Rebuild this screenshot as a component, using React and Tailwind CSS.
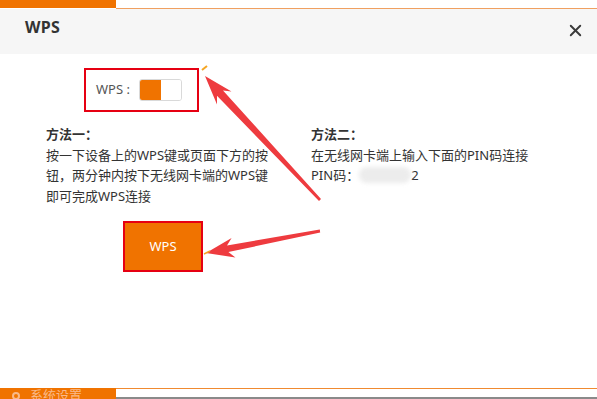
import React from 'react';
import { X } from 'lucide-react';

const font = { fontFamily: '"Noto Sans", "Noto Sans CJK SC", sans-serif' };

function Arrows() {
  return (
    <svg className="absolute inset-0 pointer-events-none" width="597" height="399" viewBox="0 0 597 399">
      <polygon
        points="205,76 231.5,91.5 223,90.5 321,199 319,201 217,95.8 217,104.5"
        fill="#ee3b3f"
      />
      <path d="M202 70 L207 66" stroke="#f5a623" strokeWidth="2" />
      <polygon
        points="206,253 231.6,237.9 227,245.5 319.8,229.5 320.2,232.5 228.4,252 235.4,257.5"
        fill="#ee3b3f"
      />
      <path d="M204 254 L210 251" stroke="#f5a623" strokeWidth="1.5" />
    </svg>
  );
}

export default function App() {
  return (
    <div className="relative w-[597px] h-[399px] bg-white flex flex-col overflow-hidden" style={font}>
      <div className="flex h-[9px] shrink-0">
        <div className="w-[116px] h-[8px] bg-[#f07300]" />
        <div className="flex-1 h-[9px] border-b border-[#f0a060]" />
      </div>

      <div className="h-[45px] shrink-0 bg-[#f6f6f6] flex items-center justify-between pl-[25px] pr-[12px]">
        <span className="text-[16px] font-bold text-[#333] -mt-[10px] tracking-[0.3px]">WPS</span>
        <X className="w-[19px] h-[19px] text-[#3a3a3a] -mt-[2px]" strokeWidth={2.4} />
      </div>

      <div className="flex-1 flex flex-col">
        <div className="ml-[84px] mt-[14px] w-[115px] h-[44px] border-2 border-[#e60012] flex items-center pl-[10px] gap-[9px]">
          <span className="text-[13px] text-[#555]">WPS :</span>
          <div className="flex w-[43px] h-[22px] rounded-[3px] border border-[#d9d9d9] overflow-hidden">
            <div className="w-[21px] bg-[#f07300]" />
            <div className="flex-1 bg-white" />
          </div>
        </div>

        <div className="flex mt-[12px] text-[13px] leading-[20.5px] text-[#333]">
          <div className="ml-[46px] w-[240px]">
            <div className="font-bold">方法一：</div>
            <div>按一下设备上的WPS键或页面下方的按</div>
            <div>钮，两分钟内按下无线网卡端的WPS键</div>
            <div>即可完成WPS连接</div>
          </div>
          <div className="ml-[25px]">
            <div className="font-bold">方法二：</div>
            <div>在无线网卡端上输入下面的PIN码连接</div>
            <div className="flex items-center">
              <span>PIN码：</span>
              <span className="inline-block w-[52px] h-[16px] rounded-full bg-[#ececec] blur-[2px]" />
              <span>2</span>
            </div>
          </div>
        </div>

        <button className="ml-[123px] mt-[15px] w-[80px] h-[51px] bg-[#f07300] border-2 border-[#e60012] text-white text-[13px]">
          WPS
        </button>
      </div>

      <div className="flex h-[11px] shrink-0">
        <div className="w-[116px] bg-[#f07300] overflow-hidden flex items-start pl-[12px] gap-[10px]">
          <span className="mt-[4px] w-[8px] h-[8px] rounded-full border-2 border-[#f9b98a]" />
          <span className="text-[13px] leading-[20px] text-[#f9b98a] -mt-[3px]">系统设置</span>
        </div>
        <div className="flex-1 border-t border-[#f08a30] border-b-2 border-b-[#8a8a8a]" />
      </div>

      <Arrows />
    </div>
  );
}
